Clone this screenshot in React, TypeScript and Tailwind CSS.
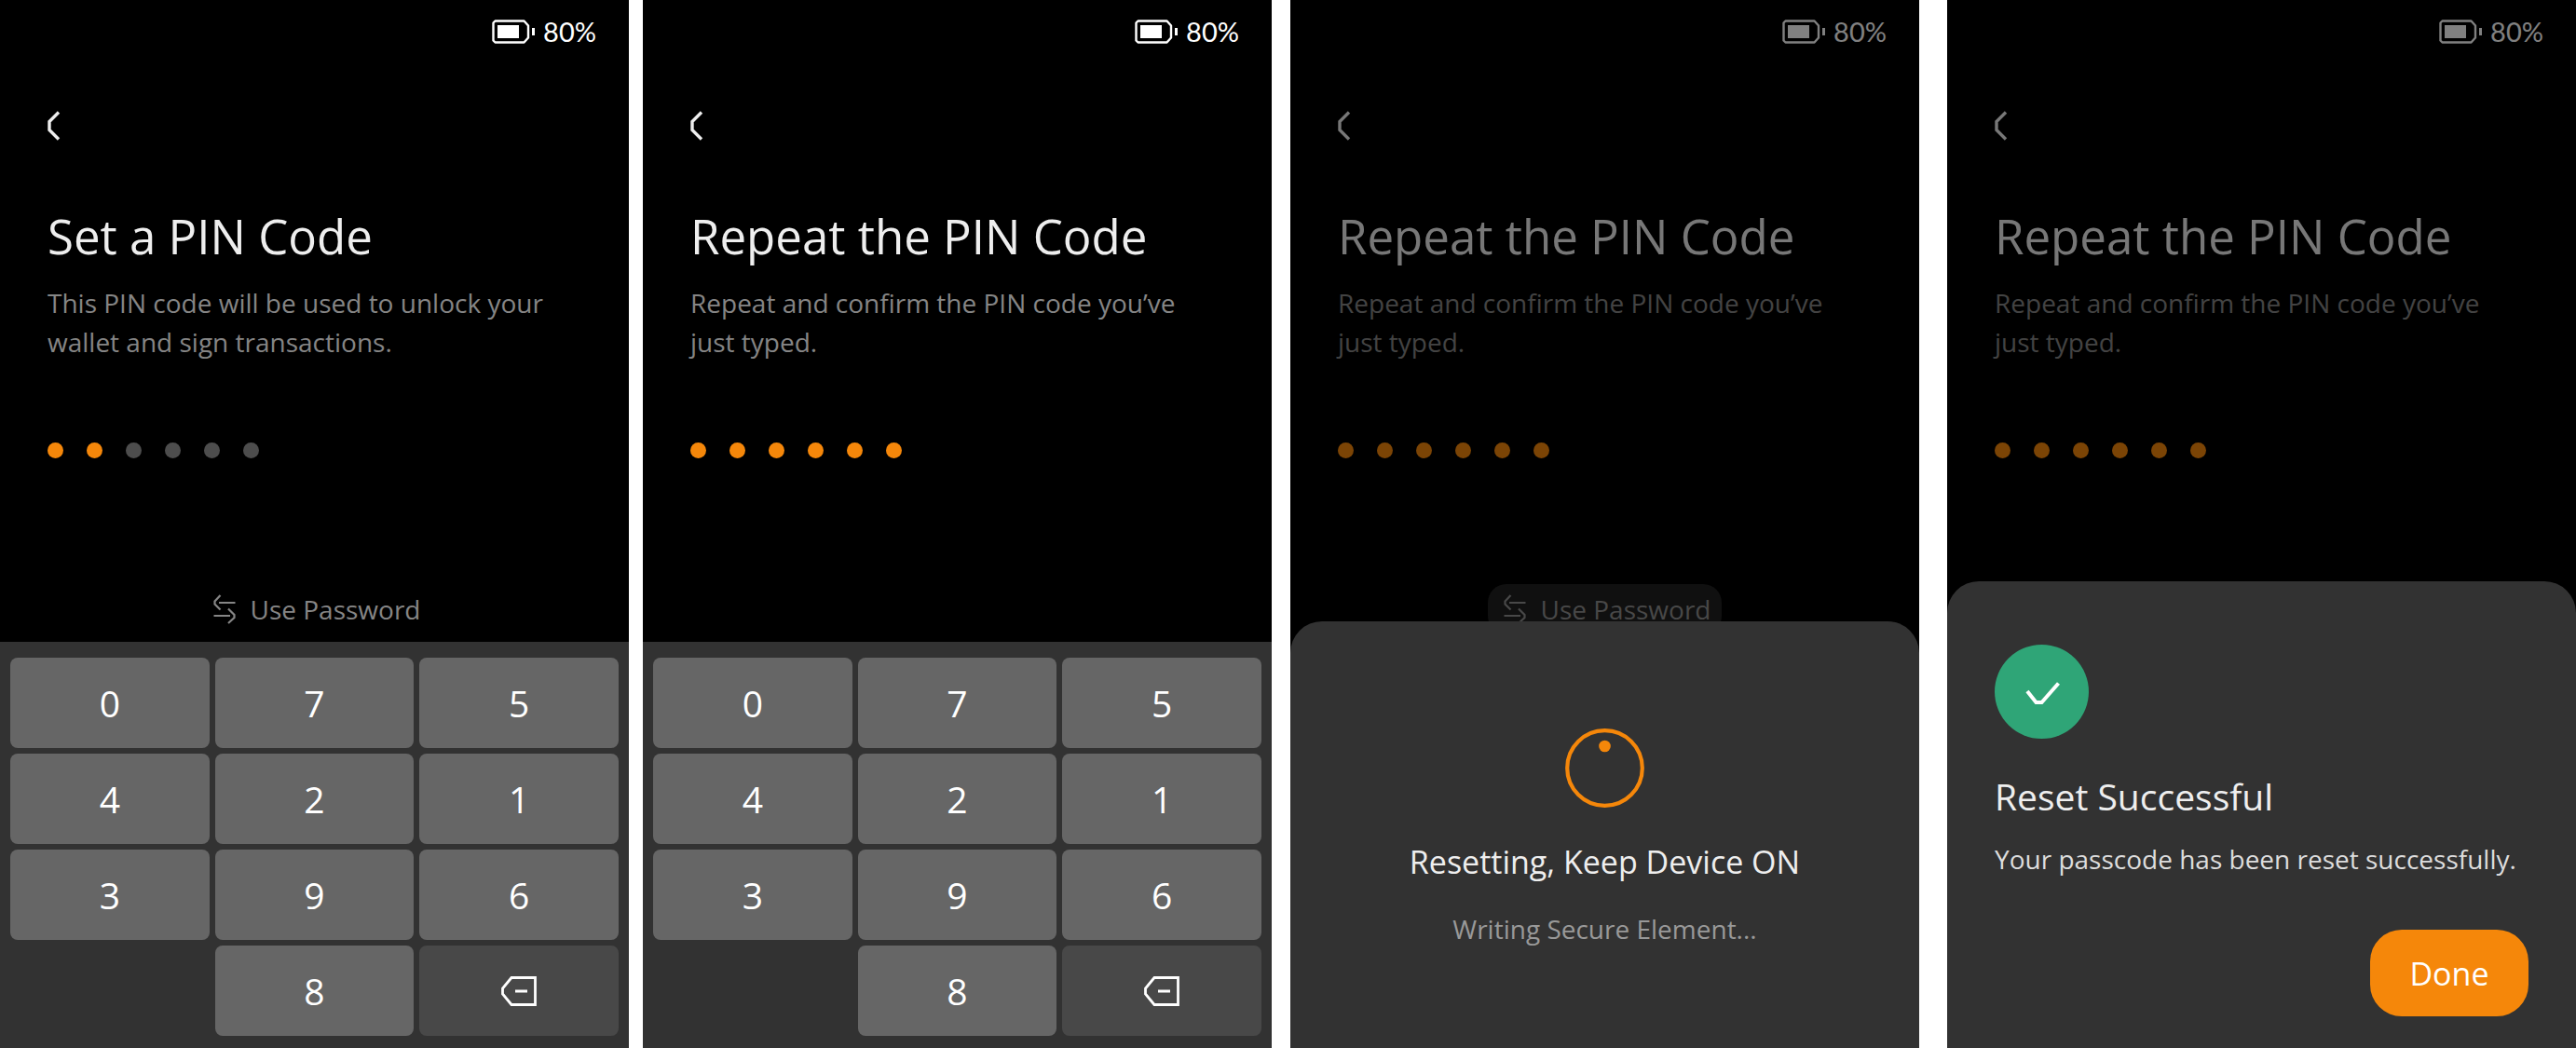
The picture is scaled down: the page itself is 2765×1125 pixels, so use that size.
import type { ReactNode } from 'react';

const KEYS = ['0', '7', '5', '4', '2', '1', '3', '9', '6'];

function StatusBar() {
  return (
    <div className="flex h-[68px] shrink-0 items-center justify-end gap-[9px] pr-[35px] text-white">
      <svg className="h-[36px] w-[46px]" viewBox="0 0 46 36" fill="none" aria-hidden="true">
        <path d="M3.5 6.5H34.500L39 11.5V24.5L34.500 29.5H3.5L1.5 27.5V8.5Z" stroke="currentColor" strokeWidth="2.4" strokeLinejoin="round" />
        <path d="M6 11H29V25H6ZM43 14H46V22H43Z" fill="currentColor" />
      </svg>
      <span className="font-['Lato',sans-serif] text-[29px] leading-[36px]">80%</span>
    </div>
  );
}

function Screen({ title, text, filled, dim, children }: { title: string; text: string; filled: number; dim?: boolean; children: ReactNode }) {
  return (
    <section className="relative flex min-h-screen min-w-0 flex-1 flex-col overflow-hidden bg-black">
      <div className={dim ? 'flex flex-1 flex-col opacity-50' : 'flex flex-1 flex-col'}>
        <StatusBar />
        <div className="flex flex-col px-[51px] pt-[47px]">
          <button type="button" aria-label="Back" className="h-[40px] w-[20px] text-[#eeeeee]">
            <svg className="h-[40px] w-[20px]" viewBox="0 0 20 40" fill="none" aria-hidden="true">
              <path d="M12 5.5L2 15.500V24.500L12 34.500" stroke="currentColor" strokeWidth="3.4" />
            </svg>
          </button>
          <h1 className="mt-[60px] text-[51px] leading-[76px] text-[#eeeeee]">{title}</h1>
          <p className="mt-[13px] text-[28px] leading-[42px] text-[#858585]">{text}</p>
          <div className="mt-[87px] flex gap-[25px]">
            {[0, 1, 2, 3, 4, 5].map((i) => (
              <span key={i} className={i < filled ? 'size-[17px] rounded-full bg-[#f5870a]' : 'size-[17px] rounded-full bg-[#4d4d4d]'} />
            ))}
          </div>
        </div>
      </div>
      {children}
    </section>
  );
}

function UsePassword({ pressed }: { pressed?: boolean }) {
  return (
    <button
      type="button"
      className={
        pressed
          ? 'flex h-[54px] items-center gap-[16px] rounded-[20px] bg-[#101010] pr-[12px] pl-[17px] text-[#484848]'
          : 'flex h-[54px] items-center gap-[16px] pr-[12px] pl-[17px] text-[#858585]'
      }
    >
      <svg className="h-[32px] w-[24px]" viewBox="0 0 24 32" fill="none" aria-hidden="true">
        <path d="M7.5 1L1.5 7.5V10.5L7.5 16.5M6 9H23.5M0.5 23H18M16 15.5L22.5 22V25L16 31" stroke="currentColor" strokeWidth="2.2" />
      </svg>
      <span className="text-[28px] leading-[42px]">Use Password</span>
    </button>
  );
}

function Keypad() {
  return (
    <div className="grid shrink-0 grid-cols-3 gap-[6px] bg-[#323232] px-[11px] pt-[17px] pb-[13px]">
      {KEYS.map((k) => (
        <Key key={k}>{k}</Key>
      ))}
      <span />
      <Key>8</Key>
      <button type="button" aria-label="Delete" className="flex h-[97px] items-center justify-center rounded-[8px] bg-[#484848] text-white">
        <svg className="h-[32px] w-[38px]" viewBox="0 0 38 32" fill="none" aria-hidden="true">
          <path d="M11 1.5H36.5V30.5H11L1.5 19V13Z M15 16H28" stroke="currentColor" strokeWidth="2.8" />
        </svg>
      </button>
    </div>
  );
}

function Key({ children }: { children: ReactNode }) {
  return (
    <button type="button" className="h-[97px] rounded-[8px] bg-[#666666] text-[39px] leading-[56px] text-white">
      {children}
    </button>
  );
}

const REPEAT_TEXT = 'Repeat and confirm the PIN code you’ve just typed.';

export default function App() {
  return (
    <main className="flex min-h-screen bg-white font-['Open_Sans',sans-serif]">
      <Screen title="Set a PIN Code" text="This PIN code will be used to unlock your wallet and sign transactions." filled={2}>
        <div className="flex justify-center pb-[8px]">
          <UsePassword />
        </div>
        <Keypad />
      </Screen>
      <div className="w-[15px] shrink-0" />
      <Screen title="Repeat the PIN Code" text={REPEAT_TEXT} filled={6}>
        <Keypad />
      </Screen>
      <div className="w-[20px] shrink-0" />
      <Screen title="Repeat the PIN Code" text={REPEAT_TEXT} filled={6} dim>
        <div className="flex h-[40px] shrink-0 justify-center">
          <UsePassword pressed />
        </div>
        <div role="status" className="relative flex shrink-0 flex-col items-center rounded-t-[34px] bg-[#323232] pt-[115px] pb-[107px]">
          <svg className="size-[85px]" viewBox="0 0 85 85" fill="none" aria-hidden="true">
            <circle cx="42.5" cy="42.5" r="40.3" stroke="#f5870a" strokeWidth="4.2" />
            <circle cx="42.5" cy="19" r="6.3" fill="#f5870a" />
          </svg>
          <h2 className="mt-[33px] text-[34px] leading-[50px] text-[#eeeeee]">Resetting, Keep Device ON</h2>
          <p className="mt-[26px] text-[28px] leading-[42px] text-[#999999]">Writing Secure Element...</p>
        </div>
      </Screen>
      <div className="w-[30px] shrink-0" />
      <Screen title="Repeat the PIN Code" text={REPEAT_TEXT} filled={6} dim>
        <div role="dialog" aria-labelledby="done-title" className="flex shrink-0 flex-col rounded-t-[34px] bg-[#323232] px-[51px] pt-[68px] pb-[34px]">
          <div className="flex size-[101px] items-center justify-center rounded-full bg-[#2fa577]">
            <svg className="h-[28px] w-[40px]" viewBox="0 0 40 28" fill="none" aria-hidden="true">
              <path d="M4 13L13.5 25H19.5L37.5 4.5" stroke="white" strokeWidth="4" />
            </svg>
          </div>
          <h2 id="done-title" className="mt-[34px] text-[39px] leading-[56px] text-[#eeeeee]">Reset Successful</h2>
          <p className="mt-[18px] text-[28px] leading-[42px] whitespace-nowrap text-[#dddddd]">Your passcode has been reset successfully.</p>
          <button type="button" className="mt-[55px] h-[93px] w-[170px] self-end rounded-[34px] bg-[#f5870a] text-[34px] leading-[50px] text-white">
            Done
          </button>
        </div>
      </Screen>
    </main>
  );
}
